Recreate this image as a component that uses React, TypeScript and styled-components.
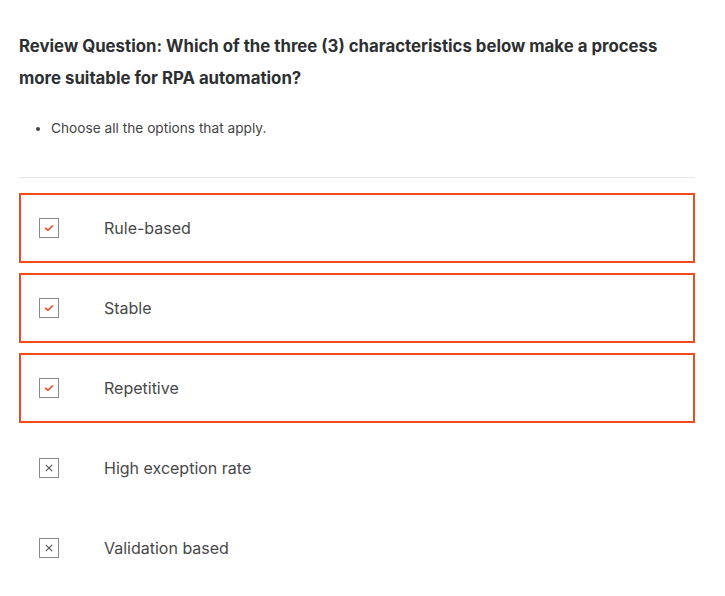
import { createGlobalStyle } from "styled-components";
import styled from "styled-components";

const GlobalStyle = createGlobalStyle`
    body {
        margin: 0;
        background: #ffffff;
        font-family: Inter, "Noto Sans", Arial, sans-serif;
    }
`

interface OptionProps {
    $selected?: boolean;
}

const Page = styled.div`
    width: 676px;
    padding: 30px 0 0 19px;
`

const Title = styled.h2`
    margin: 0;
    font-size: 16.8px;
    font-weight: 700;
    line-height: 32px;
    color: #2d2f31;
`

const Hints = styled.ul`
    margin: 22px 0 0;
    padding-left: 32px;
    font-size: 13.7px;
    line-height: 24px;
    color: #444;
`

const Divider = styled.hr`
    margin: 37px 0 15px;
    border: none;
    border-top: 1px solid #e8e8e8;
`

const Options = styled.div`
    display: flex;
    flex-direction: column;
    gap: 10px;
`

const Option = styled.div<OptionProps>`
    display: flex;
    align-items: center;
    gap: 45px;
    height: 70px;
    box-sizing: border-box;
    padding-left: 18px;
    border: 2px solid ${p => p.$selected ? "#f04a1d" : "transparent"};
`

const Box = styled.span`
    width: 20px;
    height: 20px;
    box-sizing: border-box;
    border: 1px solid #8a8a8a;
    display: flex;
    align-items: center;
    justify-content: center;
`

const Label = styled.span`
    font-size: 16px;
    color: #484848;
`

const options = [
    { label: "Rule-based", correct: true },
    { label: "Stable", correct: true },
    { label: "Repetitive", correct: true },
    { label: "High exception rate", correct: false },
    { label: "Validation based", correct: false },
]

function Mark({ correct }: { correct: boolean }) {
    if (correct) {
        return (
            <svg width="10" height="10" viewBox="0 0 10 10">
                <path d="M1.5 5.2 L4 7.3 L8.6 2.8" fill="none" stroke="#f04a1d" strokeWidth="1.6" strokeLinecap="round" strokeLinejoin="round" />
            </svg>
        )
    }
    return (
        <svg width="10" height="10" viewBox="0 0 10 10">
            <path d="M1.8 1.8 L8.2 8.2 M8.2 1.8 L1.8 8.2" fill="none" stroke="#555" strokeWidth="1.1" />
        </svg>
    )
}

export default function App() {
    return (
        <Page>
            <GlobalStyle />
            <Title>Review Question: Which of the three (3) characteristics below make a process more suitable for RPA automation?</Title>
            <Hints>
                <li>Choose all the options that apply.</li>
            </Hints>
            <Divider />
            <Options>
                {options.map(o => (
                    <Option key={o.label} $selected={o.correct}>
                        <Box><Mark correct={o.correct} /></Box>
                        <Label>{o.label}</Label>
                    </Option>
                ))}
            </Options>
        </Page>
    )
}
